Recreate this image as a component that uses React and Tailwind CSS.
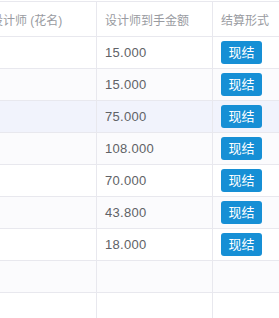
export default function App() {
  const rows = ["15.000", "15.000", "75.000", "108.000", "70.000", "43.800", "18.000", null, null];
  const font = { fontFamily: '"Liberation Sans", "Noto Sans CJK SC", sans-serif' };

  return (
    <div className="w-[279px] h-[318px] overflow-hidden bg-white" style={font}>
      <div className="-ml-[17px] w-[320px] mt-px">
        {/* header */}
        <div className="flex h-[36px] border-y border-[#e8e8ee] text-[12px] text-[#999ba1]">
          <div className="w-[114px] border-r border-[#e8e8ee] flex items-center pl-[8px] pt-[3px]">设计师 (花名)</div>
          <div className="w-[116px] border-r border-[#e8e8ee] flex items-center pl-[8px] pt-[3px]">设计师到手金额</div>
          <div className="flex-1 flex items-center pl-[8px] pt-[3px]">结算形式</div>
        </div>
        {rows.map((v, i) => (
          <div
            key={i}
            className={
              "flex h-[32px] border-b border-[#e8e8ee] " +
              (i === 2 ? "bg-[#f1f3fc]" : i % 2 === 1 ? "bg-[#fbfbfd]" : "bg-white")
            }
          >
            <div className="w-[114px] border-r border-[#e8e8ee]"></div>
            <div className="w-[116px] border-r border-[#e8e8ee] flex items-center pl-[8px] text-[13px] tracking-[0.3px] text-[#606266]">
              {v}
            </div>
            <div className="flex-1 flex items-center pl-[8px]">
              {v && (
                <span className="w-[41px] h-[23px] rounded-[3px] bg-[#168fd5] text-white text-[13px] flex items-center justify-center">
                  现结
                </span>
              )}
            </div>
          </div>
        ))}
      </div>
    </div>
  );
}
